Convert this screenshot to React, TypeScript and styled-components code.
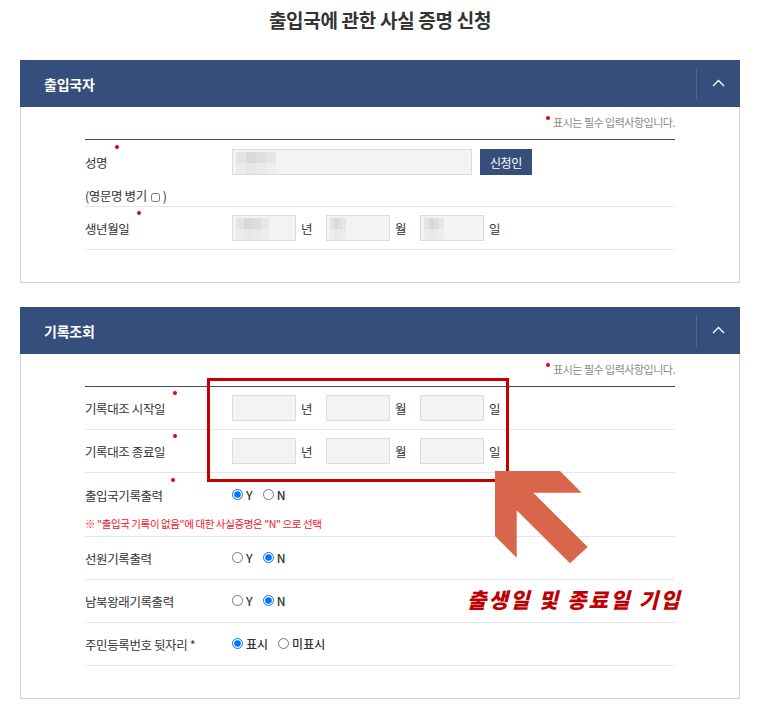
import React from "react";
import styled, { createGlobalStyle } from "styled-components";

const GlobalStyle = createGlobalStyle`
  html, body { margin: 0; padding: 0; background: #fff; }
  body {
    font-family: "Noto Sans CJK KR", "Noto Sans", sans-serif;
    color: #333;
  }
  * { box-sizing: border-box; }
`;

const Page = styled.div`
  width: 759px;
  padding: 0 19px 20px 20px;
`;

const Title = styled.h1`
  margin: 0;
  padding-top: 7px;
  height: 60px;
  text-align: center;
  font-size: 19px;
  font-weight: 700;
  letter-spacing: -0.3px;
  color: #333;
  line-height: 26px;
`;

const Section = styled.section<{ $gap?: number }>`
  margin-top: ${(p) => p.$gap ?? 0}px;
`;

const SectionHeader = styled.div`
  display: flex;
  align-items: center;
  height: 47px;
  background: #354e7b;
  padding-left: 24px;
`;

const SectionTitle = styled.h2`
  margin: 0;
  font-size: 14px;
  font-weight: 700;
  color: #fff;
  letter-spacing: -0.2px;
`;

const Toggle = styled.button`
  margin-left: auto;
  width: 44px;
  height: 32px;
  border: none;
  border-left: 1px solid #4c6592;
  background: transparent;
  display: flex;
  align-items: center;
  justify-content: center;
  padding: 0 0 2px 0;
  cursor: pointer;
`;

const SectionBody = styled.div`
  position: relative;
  border: 1px solid #d2d2d2;
  border-top: none;
  padding: 8px 64px 32px 64px;
`;

const RequiredNote = styled.p`
  margin: 0 0 10px;
  text-align: right;
  font-size: 11px;
  letter-spacing: -0.5px;
  color: #8a8a8a;
  line-height: 14px;
`;

const RedDot = styled.span`
  display: inline-block;
  width: 4px;
  height: 4px;
  border-radius: 50%;
  background: #e60012;
  vertical-align: top;
  margin: 1px 3px 0 0;
`;

const Table = styled.div`
  border-top: 1px solid #354e7b;
`;

const Row = styled.div`
  display: grid;
  grid-template-columns: 147px 1fr;
  align-items: center;
  border-bottom: 1px solid #e6e6e6;
  padding: 8px 0 8px;
  min-height: 43px;
`;

const WideRow = styled.div`
  border-bottom: 1px solid #e6e6e6;
  padding: 9px 0 0;
`;

const RowLine = styled.div`
  display: grid;
  grid-template-columns: 147px 1fr;
  align-items: center;
`;

const Label = styled.span<{ $required?: boolean }>`
  position: relative;
  display: inline-block;
  justify-self: start;
  font-size: 12.5px;
  letter-spacing: -0.4px;
  color: #333;
  line-height: 18px;
  padding-top: 2px;
  &::after {
    content: "";
    display: ${(p) => (p.$required ? "block" : "none")};
    position: absolute;
    right: -12px;
    top: -7px;
    width: 4px;
    height: 4px;
    border-radius: 50%;
    background: #e60012;
  }
`;

const SubLine = styled.div`
  font-size: 12.5px;
  letter-spacing: -0.4px;
  color: #333;
  line-height: 18px;
  padding: 11px 0 0;
  height: 31px;
  display: flex;
  align-items: center;
`;

const CheckBox = styled.input`
  width: 9px;
  height: 9px;
  margin: 2px 3px 0 4px;
  accent-color: #777;
`;

const Controls = styled.div`
  display: flex;
  align-items: center;
`;

const TextInput = styled.input<{ $w: number; $mosaic?: number }>`
  width: ${(p) => p.$w}px;
  height: 26px;
  border: 1px solid #dcdcdc;
  background-color: #f3f3f3;
  padding: 0 6px;
  font: inherit;
  font-size: 12px;
  outline: none;
  background-repeat: no-repeat;
  background-position: 3px 2px;
  background-size: ${(p) => (p.$mosaic ?? 0)}px 22px;
  background-image: ${(p) =>
    p.$mosaic
      ? `linear-gradient(to bottom, rgba(243,243,243,0) 0 11px, rgba(243,243,243,0.55) 11px 22px),
         linear-gradient(to right, #e3e3e3 0 25%, #d9d9d9 25% 50%, #dedede 50% 75%, #e6e6e6 75% 100%)`
      : "none"};
`;

const Unit = styled.span`
  font-size: 12.5px;
  color: #333;
  width: 30px;
  padding-left: 5px;
`;

const ApplicantButton = styled.button`
  margin-left: 8px;
  height: 26px;
  width: 52px;
  border: none;
  background: #354e7b;
  color: #fff;
  font: inherit;
  font-size: 12px;
  letter-spacing: -0.3px;
  padding: 0;
`;

const RadioGroup = styled.div`
  display: flex;
  align-items: center;
  gap: 10px;
  height: 26px;
`;

const RadioLabel = styled.label`
  display: inline-flex;
  align-items: center;
  font-size: 12px;
  font-weight: 500;
  color: #333;
  gap: 3px;
  line-height: 16px;
`;

const Radio = styled.input`
  width: 11px;
  height: 11px;
  margin: 0 0 2px 0;
`;

const WarnNote = styled.p`
  margin: 9px 0 0;
  font-size: 10.5px;
  letter-spacing: -0.4px;
  color: #f4111f;
  line-height: 14px;
  height: 19px;
`;

const HighlightBox = styled.div`
  position: absolute;
  left: 186px;
  top: 24px;
  width: 302px;
  height: 104px;
  border: 3px solid #c40000;
  pointer-events: none;
`;

const ArrowMark = styled.svg`
  position: absolute;
  left: 474px;
  top: 117px;
  width: 94px;
  height: 94px;
`;

const Callout = styled.div`
  position: absolute;
  left: 446px;
  top: 231px;
  font-size: 21px;
  font-weight: 900;
  font-style: italic;
  letter-spacing: 2.2px;
  color: #c00000;
  line-height: 28px;
  white-space: nowrap;
`;

const Chevron = () => (
  <svg width="13" height="8" viewBox="0 0 13 8" fill="none">
    <path d="M1 7 L6.5 1.5 L12 7" stroke="#fff" strokeWidth="1.4" />
  </svg>
);

type RadioOpt = { label: string; checked?: boolean };

const RadioSet = ({ name, options }: { name: string; options: RadioOpt[] }) => (
  <RadioGroup>
    {options.map((o) => (
      <RadioLabel key={o.label}>
        <Radio type="radio" name={name} defaultChecked={o.checked} />
        {o.label}
      </RadioLabel>
    ))}
  </RadioGroup>
);

const DateInputs = ({ mosaic }: { mosaic?: boolean }) => (
  <Controls>
    <TextInput $w={64} $mosaic={mosaic ? 33 : 0} />
    <Unit>년</Unit>
    <TextInput $w={64} $mosaic={mosaic ? 16 : 0} />
    <Unit>월</Unit>
    <TextInput $w={64} $mosaic={mosaic ? 20 : 0} />
    <Unit>일</Unit>
  </Controls>
);

const Note = () => (
  <RequiredNote>
    <RedDot />
    표시는 필수 입력사항입니다.
  </RequiredNote>
);

export default function App() {
  return (
    <Page>
      <GlobalStyle />
      <Title>출입국에 관한 사실 증명 신청</Title>

      <Section>
        <SectionHeader>
          <SectionTitle>출입국자</SectionTitle>
          <Toggle aria-label="접기">
            <Chevron />
          </Toggle>
        </SectionHeader>
        <SectionBody>
          <Note />
          <Table>
            <WideRow>
              <RowLine>
                <Label $required>성명</Label>
                <Controls>
                  <TextInput $w={240} $mosaic={40} />
                  <ApplicantButton>신청인</ApplicantButton>
                </Controls>
              </RowLine>
              <SubLine>
                (영문명 병기
                <CheckBox type="checkbox" />)
              </SubLine>
            </WideRow>
            <Row>
              <Label $required>생년월일</Label>
              <DateInputs mosaic />
            </Row>
          </Table>
        </SectionBody>
      </Section>

      <Section $gap={24}>
        <SectionHeader>
          <SectionTitle>기록조회</SectionTitle>
          <Toggle aria-label="접기">
            <Chevron />
          </Toggle>
        </SectionHeader>
        <SectionBody>
          <Note />
          <Table>
            <Row>
              <Label $required>기록대조 시작일</Label>
              <DateInputs />
            </Row>
            <Row>
              <Label $required>기록대조 종료일</Label>
              <DateInputs />
            </Row>
            <WideRow>
              <RowLine>
                <Label $required>출입국기록출력</Label>
                <RadioSet
                  name="entry"
                  options={[{ label: "Y", checked: true }, { label: "N" }]}
                />
              </RowLine>
              <WarnNote>※ "출입국 기록이 없음"에 대한 사실증명은 "N" 으로 선택</WarnNote>
            </WideRow>
            <Row>
              <Label>선원기록출력</Label>
              <RadioSet
                name="crew"
                options={[{ label: "Y" }, { label: "N", checked: true }]}
              />
            </Row>
            <Row>
              <Label>남북왕래기록출력</Label>
              <RadioSet
                name="nk"
                options={[{ label: "Y" }, { label: "N", checked: true }]}
              />
            </Row>
            <Row>
              <Label>주민등록번호 뒷자리 *</Label>
              <RadioSet
                name="rrn"
                options={[{ label: "표시", checked: true }, { label: "미표시" }]}
              />
            </Row>
          </Table>

          <HighlightBox />
          <ArrowMark viewBox="0 0 94 94">
            <polygon
              points="0,0 65,0 86.7,21.7 38.3,21.7 92.7,76 75,92.3 21.7,39.3 21.7,86.7 0,65"
              fill="#d9654a"
            />
          </ArrowMark>
          <Callout>출생일 및 종료일 기입</Callout>
        </SectionBody>
      </Section>
    </Page>
  );
}
